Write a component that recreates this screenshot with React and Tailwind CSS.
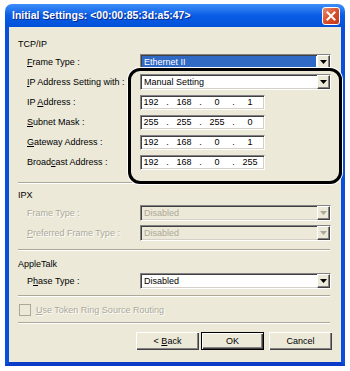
import React from 'react';

const sunken = 'border-t border-l border-t-[#848284] border-l-[#848284] border-b border-r border-b-white border-r-white shadow-[inset_1px_1px_0_#404040,inset_-1px_-1px_0_#D4D0C8]';

function Label({ text, u, disabled }) {
  const i = u == null ? -1 : u;
  return (
    <span className={disabled ? 'text-[#ACA899] [text-shadow:1px_1px_0_#fff]' : 'text-black'}>
      {i < 0 ? text : (
        <>
          {text.slice(0, i)}
          <span className="underline underline-offset-1">{text[i]}</span>
          {text.slice(i + 1)}
        </>
      )}
    </span>
  );
}

function Arrow({ disabled }) {
  return (
    <div className="w-[13px] h-full flex items-center justify-center bg-[#ECE9D8] border-t border-l border-white border-b border-r border-b-[#404040] border-r-[#404040] shadow-[inset_-1px_-1px_0_#848284]">
      <svg width="7" height="4" viewBox="0 0 7 4">
        <polygon points="0,0 7,0 3.5,4" fill={disabled ? '#ACA899' : '#000'} />
      </svg>
    </div>
  );
}

function Dropdown({ value, disabled, selected }) {
  return (
    <div className={`w-[191px] h-[16px] flex ${sunken} ${disabled ? 'bg-[#ECE9D8]' : 'bg-white'}`}>
      <div className="flex-1 flex items-center px-[1px]">
        <span className={`px-[2px] leading-[12px] ${selected ? 'bg-[#316AC5] text-white w-full' : disabled ? 'text-[#ACA899]' : 'text-black'}`}>{value}</span>
      </div>
      <Arrow disabled={disabled} />
    </div>
  );
}

function IpField({ parts }) {
  return (
    <div className={`w-[125px] h-[15px] bg-white flex items-center ${sunken}`}>
      {parts.map((p, i) => (
        <React.Fragment key={i}>
          {i > 0 && <span className="w-[13px] text-center">.</span>}
          <span className="w-[20px] text-center">{p}</span>
        </React.Fragment>
      ))}
    </div>
  );
}

function Row({ label, u, disabled, children }) {
  return (
    <div className="h-[20px] flex items-center pl-[18px]">
      <div className="w-[113px]"><Label text={label} u={u} disabled={disabled} /></div>
      {children}
    </div>
  );
}

function Sep({ className = '' }) {
  return <div className={`ml-[9px] w-[312px] h-[2px] border-t border-[#ACA899] border-b border-b-white ${className}`} />;
}

function Button({ children, isDefault }) {
  return (
    <div className={`w-[63px] h-[18px] flex items-center justify-center bg-[#ECE9D8] ${isDefault ? 'border border-black shadow-[inset_1px_1px_0_#fff,inset_-1px_-1px_0_#404040,inset_-2px_-2px_0_#848284]' : 'shadow-[inset_1px_1px_0_#fff,inset_-1px_-1px_0_#404040,inset_-2px_-2px_0_#848284]'}`}>
      {children}
    </div>
  );
}

export default function App() {
  return (
    <div className="w-[350px] h-[371px] bg-white relative overflow-hidden font-['Liberation_Sans',Arial,sans-serif] text-[9px] leading-[11px]">
      <div className="ml-[5px] mt-[4px] w-[340px] h-[362px] flex flex-col rounded-t-[7px] overflow-hidden">
        <div className="h-[23px] flex items-center justify-between pl-[7px] pr-[5px] bg-gradient-to-b from-[#3D8FF8] via-[#0A5CE6] to-[#0350D8]">
          <span className="text-white font-bold text-[10.5px] [text-shadow:1px_1px_0_#0A2A8A]">Initial Settings: &lt;00:00:85:3d:a5:47&gt;</span>
          <div className="w-[18px] h-[18px] rounded-[3px] border border-white bg-gradient-to-br from-[#E88A6E] via-[#D9502C] to-[#C2361A] flex items-center justify-center">
            <svg width="10" height="10" viewBox="0 0 10 10">
              <path d="M1.5 1.5 L8.5 8.5 M8.5 1.5 L1.5 8.5" stroke="#fff" strokeWidth="2" strokeLinecap="square" />
            </svg>
          </div>
        </div>
        <div className="flex-1 flex flex-col bg-[#ECE9D8] border-x-[4px] border-x-[#0A4EDC] border-b-[4px] border-b-[#0A3CC8]">
          <div className="pt-[10px] pl-[9px] h-[23px] flex items-end">TCP/IP</div>
          <div className="mt-[2px]">
            <Row label="Frame Type :" u={0}><Dropdown value="Ethernet II" selected /></Row>
            <Row label="IP Address Setting with :" u={0}><Dropdown value="Manual Setting" /></Row>
            <Row label="IP Address :" u={3}><IpField parts={['192', '168', '0', '1']} /></Row>
            <Row label="Subnet Mask :" u={0}><IpField parts={['255', '255', '255', '0']} /></Row>
            <Row label="Gateway Address :" u={0}><IpField parts={['192', '168', '0', '1']} /></Row>
            <Row label="Broadcast Address :" u={5}><IpField parts={['192', '168', '0', '255']} /></Row>
          </div>
          <Sep className="mt-[10px]" />
          <div className="mt-[5px] pl-[9px] h-[13px] flex items-center">IPX</div>
          <div className="mt-[1px]">
            <Row label="Frame Type :" disabled><Dropdown value="Disabled" disabled /></Row>
            <Row label="Preferred Frame Type :" u={0} disabled><Dropdown value="Disabled" disabled /></Row>
          </div>
          <Sep className="mt-[6px]" />
          <div className="mt-[7px] pl-[9px] h-[13px] flex items-center">AppleTalk</div>
          <Row label="Phase Type :" u={1}><Dropdown value="Disabled" /></Row>
          <Sep className="mt-[4px]" />
          <div className="mt-[6px] h-[14px] flex items-center pl-[10px] gap-[5px]">
            <div className="w-[12px] h-[12px] border border-[#ACA899] bg-[#ECE9D8]" />
            <Label text="Use Token Ring Source Routing" u={0} disabled />
          </div>
          <Sep className="mt-[5px]" />
          <div className="mt-[8px] flex justify-end pr-[9px]">
            <Button><span>&lt; <span className="underline underline-offset-1">B</span>ack</span></Button>
            <div className="ml-[2px]"><Button isDefault>OK</Button></div>
            <div className="ml-[5px]"><Button>Cancel</Button></div>
          </div>
        </div>
      </div>
      <div className="absolute left-[128px] top-[68px] w-[214px] h-[116px] border-[3px] border-black rounded-[12px] shadow-[0_0_0_1px_#fff]" />
    </div>
  );
}
